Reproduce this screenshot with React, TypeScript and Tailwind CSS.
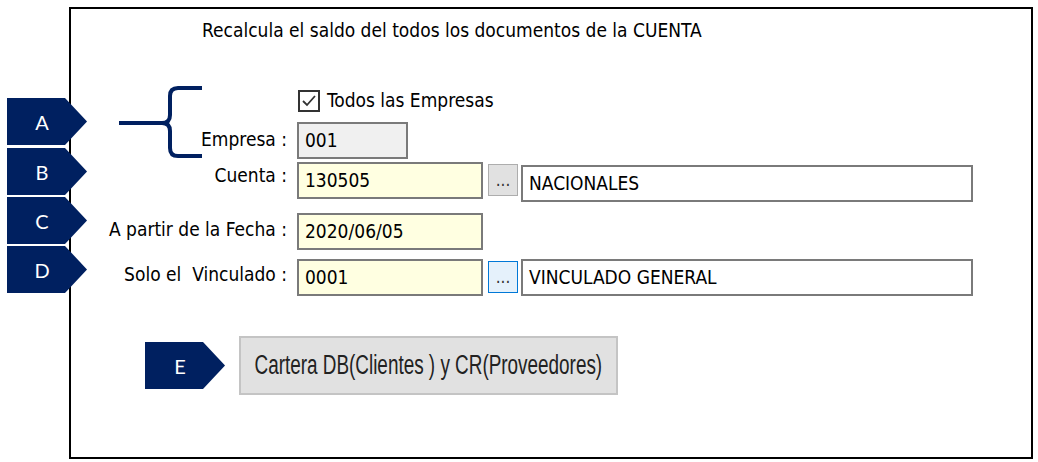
import React from "react";

const tahoma = { fontFamily: '"DejaVu Sans Condensed", "DejaVu Sans", sans-serif' };

function Tag({ letter, className }: { letter: string; className: string }) {
  return (
    <div className={`absolute w-[80px] h-[47px] ${className}`}>
      <svg width="80" height="47" viewBox="0 0 80 47" className="absolute inset-0">
        <polygon points="0,0 58,0 80,23.5 58,47 0,47" fill="#002060" />
      </svg>
      <span
        className="absolute inset-0 flex items-center justify-center pr-[12px] pl-[2px] text-white text-[20px]"
        style={{ fontFamily: 'Lato, "Open Sans", sans-serif' }}
      >
        {letter}
      </span>
    </div>
  );
}

function Dots({ active }: { active?: boolean }) {
  return (
    <button
      className={`w-[30px] h-[32px] flex items-end justify-center pb-[6px] border ${
        active ? "bg-[#e5f1fb] border-[#0078d7]" : "bg-[#e1e1e1] border-[#adadad]"
      }`}
    >
      <span className="text-[17px] leading-none text-[#333]" style={tahoma}>
        ...
      </span>
    </button>
  );
}

export default function App() {
  const field =
    "h-[37px] border-2 border-[#7a7a7a] flex items-center px-[6px] text-[19px] text-black shrink-0";
  const label = "w-[216px] shrink-0 text-right text-[19px] leading-[24px] text-black";
  return (
    <div className="relative w-[1038px] h-[462px] bg-white overflow-hidden" style={tahoma}>
      <div className="ml-[69px] mt-[7px] w-[964px] h-[452px] border-2 border-black">
        <div className="pl-[131px] pt-[11px] text-[19px] leading-[20px] text-black">
          Recalcula el saldo del todos los documentos de la CUENTA
        </div>

        <div className="mt-[49px] flex flex-col">
          {/* checkbox */}
          <div className="flex items-center h-[23px] pl-[227px]">
            <div className="w-[22px] h-[22px] border-2 border-[#333] bg-white flex items-center justify-center">
              <svg width="16" height="14" viewBox="0 0 16 14">
                <polyline points="2,7 6,11 14,2" fill="none" stroke="#333" strokeWidth="1.8" />
              </svg>
            </div>
            <span className="ml-[7px] text-[19px] leading-[23px] text-black">Todos las Empresas</span>
          </div>

          {/* Empresa */}
          <div className="flex items-start mt-[10px]">
            <span className={`${label} mt-[5px]`}>Empresa :</span>
            <div className={`${field} ml-[10px] w-[111px] h-[36px] bg-[#f0f0f0] text-[#6d6d6d]`}>001</div>
          </div>

          {/* Cuenta */}
          <div className="flex items-start mt-[3px]">
            <span className={`${label} mt-[1px]`}>Cuenta :</span>
            <div className={`${field} ml-[10px] w-[186px] bg-[#ffffe1]`}>130505</div>
            <div className="ml-[5px] mt-[2px]">
              <Dots />
            </div>
            <div className={`${field} ml-[3px] mt-[3px] w-[452px] bg-white`}>NACIONALES</div>
          </div>

          {/* Fecha */}
          <div className="flex items-start mt-[11px]">
            <span className={`${label} mt-[4px]`}>A partir de la Fecha :</span>
            <div className={`${field} ml-[10px] w-[186px] bg-[#ffffe1]`}>2020/06/05</div>
          </div>

          {/* Vinculado */}
          <div className="flex items-start mt-[9px]">
            <span className={`${label} mt-[3px] whitespace-pre`}>Solo el  Vinculado :</span>
            <div className={`${field} ml-[10px] w-[186px] bg-[#ffffe1]`}>0001</div>
            <div className="ml-[5px] mt-[2px]">
              <Dots active />
            </div>
            <div className={`${field} ml-[3px] w-[452px] bg-white`}>VINCULADO GENERAL</div>
          </div>

          {/* Action button */}
          <div className="pl-[168px] mt-[40px]">
            <button className="w-[379px] h-[59px] bg-[#e1e1e1] border-2 border-[#c4c4c4] flex items-center justify-center overflow-hidden">
              <span
                className="inline-block scale-x-[0.7] text-[27px] leading-none text-[#222] whitespace-nowrap"
                style={{ fontFamily: '"Liberation Sans", Arial, sans-serif' }}
              >
                Cartera DB(Clientes ) y CR(Proveedores)
              </span>
            </button>
          </div>
        </div>
      </div>

      {/* annotations */}
      <Tag letter="A" className="left-[7px] top-[98px]" />
      <Tag letter="B" className="left-[7px] top-[148px]" />
      <Tag letter="C" className="left-[7px] top-[197px]" />
      <Tag letter="D" className="left-[7px] top-[246px]" />
      <Tag letter="E" className="left-[145px] top-[342px]" />

      <svg className="absolute left-[115px] top-[84px]" width="92" height="78" viewBox="0 0 92 78">
        <path d="M4 39 H48" stroke="#002060" strokeWidth="4" fill="none" />
        <path
          d="M87 4 H63 Q55 4 55 12 V31 Q55 39 47 39 Q55 39 55 47 V64 Q55 72 63 72 H87"
          stroke="#002060"
          strokeWidth="4"
          fill="none"
        />
      </svg>
    </div>
  );
}
